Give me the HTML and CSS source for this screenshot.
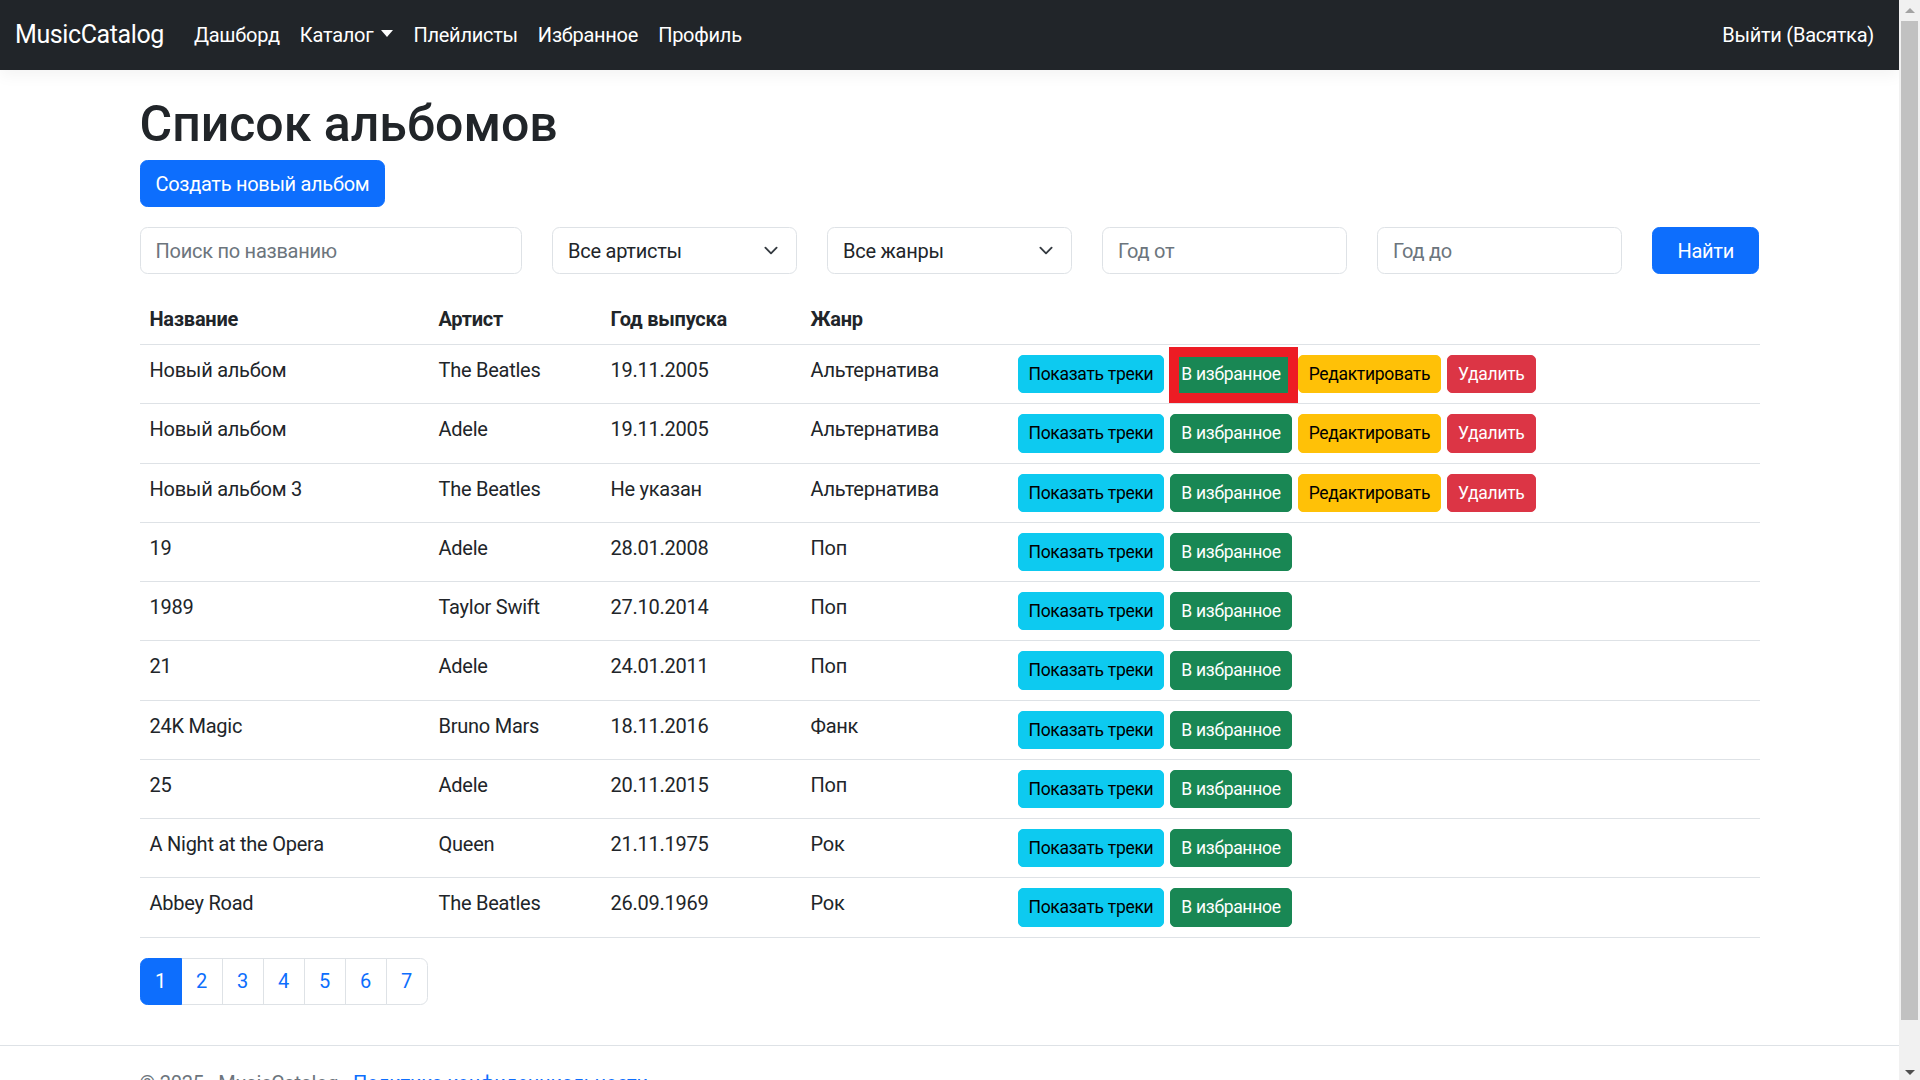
FILE: index.html
```html
<!DOCTYPE html>
<html lang="ru">
<head>
<meta charset="utf-8">
<title>Список альбомов - MusicCatalog</title>
<link rel="stylesheet" href="styles.css">
</head>
<body>
<div class="screen">
  <div class="page">
    <header class="site-header">
      <nav class="navbar">
        <a class="brand" href="#">MusicCatalog</a>
        <ul class="nav">
          <li><a class="nav-link" href="#">Дашборд</a></li>
          <li><a class="nav-link" href="#">Каталог<span class="caret"></span></a></li>
          <li><a class="nav-link" href="#">Плейлисты</a></li>
          <li><a class="nav-link" href="#">Избранное</a></li>
          <li><a class="nav-link" href="#">Профиль</a></li>
        </ul>
        <ul class="nav nav-right">
          <li><a class="nav-link" href="#">Выйти (Васятка)</a></li>
        </ul>
      </nav>
    </header>

    <div class="container">
      <main class="main">
        <h1 class="title">Список альбомов</h1>
        <a class="btn btn-primary btn-create" href="#">Создать новый альбом</a>

        <form class="filters">
          <div class="col col-3"><input class="form-control" type="text" placeholder="Поиск по названию"></div>
          <div class="col col-2">
            <div class="form-select"><span>Все артисты</span>
              <svg class="chev" viewBox="0 0 16 16" width="20" height="15"><path fill="none" stroke="#343a40" stroke-linecap="round" stroke-linejoin="round" stroke-width="2" d="m2 5 6 6 6-6"/></svg>
            </div>
          </div>
          <div class="col col-2">
            <div class="form-select"><span>Все жанры</span>
              <svg class="chev" viewBox="0 0 16 16" width="20" height="15"><path fill="none" stroke="#343a40" stroke-linecap="round" stroke-linejoin="round" stroke-width="2" d="m2 5 6 6 6-6"/></svg>
            </div>
          </div>
          <div class="col col-2"><input class="form-control" type="text" placeholder="Год от"></div>
          <div class="col col-2"><input class="form-control" type="text" placeholder="Год до"></div>
          <div class="col col-1"><button class="btn btn-primary btn-block" type="button">Найти</button></div>
        </form>

        <table class="table">
          <colgroup>
            <col class="c-name"><col class="c-artist"><col class="c-year"><col class="c-genre"><col class="c-actions">
          </colgroup>
          <thead>
            <tr><th>Название</th><th>Артист</th><th>Год выпуска</th><th>Жанр</th><th></th></tr>
          </thead>
          <tbody>
            <tr>
              <td>Новый альбом</td><td>The Beatles</td><td>19.11.2005</td><td>Альтернатива</td>
              <td><div class="actions"><a class="btn btn-sm btn-info" href="#">Показать треки</a><a class="btn btn-sm btn-success marked" href="#">В избранное<span class="mark"></span></a><a class="btn btn-sm btn-warning" href="#">Редактировать</a><a class="btn btn-sm btn-danger" href="#">Удалить</a></div></td>
            </tr>
            <tr>
              <td>Новый альбом</td><td>Adele</td><td>19.11.2005</td><td>Альтернатива</td>
              <td><div class="actions"><a class="btn btn-sm btn-info" href="#">Показать треки</a><a class="btn btn-sm btn-success" href="#">В избранное</a><a class="btn btn-sm btn-warning" href="#">Редактировать</a><a class="btn btn-sm btn-danger" href="#">Удалить</a></div></td>
            </tr>
            <tr>
              <td>Новый альбом 3</td><td>The Beatles</td><td>Не указан</td><td>Альтернатива</td>
              <td><div class="actions"><a class="btn btn-sm btn-info" href="#">Показать треки</a><a class="btn btn-sm btn-success" href="#">В избранное</a><a class="btn btn-sm btn-warning" href="#">Редактировать</a><a class="btn btn-sm btn-danger" href="#">Удалить</a></div></td>
            </tr>
            <tr>
              <td>19</td><td>Adele</td><td>28.01.2008</td><td>Поп</td>
              <td><div class="actions"><a class="btn btn-sm btn-info" href="#">Показать треки</a><a class="btn btn-sm btn-success" href="#">В избранное</a></div></td>
            </tr>
            <tr>
              <td>1989</td><td>Taylor Swift</td><td>27.10.2014</td><td>Поп</td>
              <td><div class="actions"><a class="btn btn-sm btn-info" href="#">Показать треки</a><a class="btn btn-sm btn-success" href="#">В избранное</a></div></td>
            </tr>
            <tr>
              <td>21</td><td>Adele</td><td>24.01.2011</td><td>Поп</td>
              <td><div class="actions"><a class="btn btn-sm btn-info" href="#">Показать треки</a><a class="btn btn-sm btn-success" href="#">В избранное</a></div></td>
            </tr>
            <tr>
              <td>24K Magic</td><td>Bruno Mars</td><td>18.11.2016</td><td>Фанк</td>
              <td><div class="actions"><a class="btn btn-sm btn-info" href="#">Показать треки</a><a class="btn btn-sm btn-success" href="#">В избранное</a></div></td>
            </tr>
            <tr>
              <td>25</td><td>Adele</td><td>20.11.2015</td><td>Поп</td>
              <td><div class="actions"><a class="btn btn-sm btn-info" href="#">Показать треки</a><a class="btn btn-sm btn-success" href="#">В избранное</a></div></td>
            </tr>
            <tr>
              <td>A Night at the Opera</td><td>Queen</td><td>21.11.1975</td><td>Рок</td>
              <td><div class="actions"><a class="btn btn-sm btn-info" href="#">Показать треки</a><a class="btn btn-sm btn-success" href="#">В избранное</a></div></td>
            </tr>
            <tr>
              <td>Abbey Road</td><td>The Beatles</td><td>26.09.1969</td><td>Рок</td>
              <td><div class="actions"><a class="btn btn-sm btn-info" href="#">Показать треки</a><a class="btn btn-sm btn-success" href="#">В избранное</a></div></td>
            </tr>
          </tbody>
        </table>

        <ul class="pagination">
          <li class="page-item active"><a class="page-link" href="#">1</a></li>
          <li class="page-item"><a class="page-link" href="#">2</a></li>
          <li class="page-item"><a class="page-link" href="#">3</a></li>
          <li class="page-item"><a class="page-link" href="#">4</a></li>
          <li class="page-item"><a class="page-link" href="#">5</a></li>
          <li class="page-item"><a class="page-link" href="#">6</a></li>
          <li class="page-item"><a class="page-link" href="#">7</a></li>
        </ul>
      </main>
    </div>

    <footer class="footer">
      <div class="container">© 2025 - MusicCatalog - <a href="#">Политика конфиденциальности</a></div>
    </footer>
  </div>

  <div class="scrollbar">
    <div class="sb-btn"><span class="arrow-up"></span></div>
    <div class="sb-track"><div class="sb-thumb"></div></div>
    <div class="sb-btn"><span class="arrow-down"></span></div>
  </div>
</div>
</body>
</html>
```

FILE: styles.css
```css
* { box-sizing: border-box; }

html, body {
  margin: 0;
  padding: 0;
}

body {
  font-family: Roboto, "Noto Sans", "Liberation Sans", sans-serif;
  font-size: 20px;
  line-height: 1.5;
  letter-spacing: -0.25px;
  color: #212529;
  background: #fff;
}

a { text-decoration: none; }

.screen {
  display: flex;
  width: 1920px;
  height: 1080px;
  overflow: hidden;
}

.page {
  flex: 1;
  min-width: 0;
  overflow: hidden;
  position: relative;
}

/* navbar */
.site-header {
  position: relative;
  z-index: 2;
  margin-bottom: 20px;
  box-shadow: 0 5px 15px rgba(0, 0, 0, 0.05);
}

.navbar {
  display: flex;
  align-items: center;
  height: 70px;
  padding: 10px 15px;
  background: #212529;
}

.brand {
  font-size: 25px;
  line-height: 37.5px;
  padding: 6.25px 0;
  margin-right: 20px;
  color: #fff;
  white-space: nowrap;
  letter-spacing: -0.4px;
}

.nav {
  display: flex;
  list-style: none;
  margin: 0;
  padding: 0;
}

.nav-right { margin-left: auto; }

.nav-link {
  display: block;
  padding: 10px;
  line-height: 30px;
  color: #fff;
  white-space: nowrap;
}

.caret {
  display: inline-block;
  margin-left: 8px;
  vertical-align: 5px;
  border-top: 7px solid #fff;
  border-right: 6.5px solid transparent;
  border-left: 6.5px solid transparent;
}

/* layout */
.container {
  width: 100%;
  max-width: 1650px;
  margin: 0 auto;
  padding: 0 15px;
}

.main { padding-bottom: 20px; }

.title {
  margin: 0 0 6px;
  padding-top: 4px;
  font-size: 50px;
  line-height: 60px;
  font-weight: 500;
  letter-spacing: 0;
}

/* buttons */
.btn {
  display: inline-block;
  padding: 7.5px 15px;
  font-size: 20px;
  line-height: 30px;
  text-align: center;
  border: 1px solid transparent;
  border-radius: 7.5px;
  white-space: nowrap;
  font-family: inherit;
  letter-spacing: -0.3px;
  cursor: pointer;
}

.btn-create { margin-bottom: 20px; }

.btn-block { width: 100%; display: block; }

.btn-primary { background: #0d6efd; border-color: #0d6efd; color: #fff; }
.btn-info { background: #0dcaf0; border-color: #0dcaf0; color: #000; }
.btn-success { background: #198754; border-color: #198754; color: #fff; }
.btn-warning { background: #ffc107; border-color: #ffc107; color: #000; }
.btn-danger { background: #dc3545; border-color: #dc3545; color: #fff; }

.btn-sm {
  padding: 5px 10px;
  font-size: 17.5px;
  line-height: 26.25px;
  border-radius: 5px;
}

/* filters */
.filters {
  display: flex;
  margin: 0 -15px 20px;
}

.col { padding: 0 15px; flex: none; }
.col-3 { width: 25%; }
.col-2 { width: 16.666667%; }
.col-1 { width: 8.333333%; }

.form-control,
.form-select {
  display: block;
  width: 100%;
  height: 47px;
  padding: 7.5px 15px;
  font-family: inherit;
  font-size: 20px;
  line-height: 30px;
  letter-spacing: -0.25px;
  color: #212529;
  background: #fff;
  border: 1px solid #dee2e6;
  border-radius: 7.5px;
  outline: none;
}

.form-control::placeholder { color: #6c757d; opacity: 1; }

.form-select {
  display: flex;
  align-items: center;
  justify-content: space-between;
}

.chev { flex: none; display: block; }

/* table */
.table {
  width: 100%;
  border-collapse: collapse;
  table-layout: fixed;
  margin-bottom: 20px;
  vertical-align: top;
}

.c-name { width: 289px; }
.c-artist { width: 172px; }
.c-year { width: 200px; }
.c-genre { width: 207px; }

.table th,
.table td {
  padding: 10px;
  text-align: left;
  vertical-align: top;
  border-bottom: 1px solid #dee2e6;
  line-height: 30px;
  white-space: nowrap;
}

.table th { font-weight: 700; }

.actions {
  display: flex;
  gap: 6px;
}

.marked { position: relative; }

.mark {
  position: absolute;
  top: -9px;
  left: -2px;
  right: -7px;
  bottom: -11px;
  border: 10px solid #ed1c24;
  pointer-events: none;
}

/* pagination */
.pagination {
  display: flex;
  list-style: none;
  margin: 0 0 20px;
  padding: 0;
}

.page-link {
  display: block;
  padding: 7.5px 14.5px;
  line-height: 30px;
  color: #0d6efd;
  background: #fff;
  border: 1px solid #dee2e6;
  margin-left: -1px;
}

.page-item:first-child .page-link {
  margin-left: 0;
  border-radius: 7.5px 0 0 7.5px;
}

.page-item:last-child .page-link {
  border-radius: 0 7.5px 7.5px 0;
}

.page-item.active .page-link {
  background: #0d6efd;
  border-color: #0d6efd;
  color: #fff;
  position: relative;
  z-index: 1;
}

/* footer */
.footer {
  border-top: 1px solid #dee2e6;
  line-height: 75px;
  white-space: nowrap;
  color: #6c757d;
}

.footer a { color: #0d6efd; }

/* scrollbar */
.scrollbar {
  flex: none;
  width: 21px;
  height: 1080px;
  background: #f1f1f1;
  display: flex;
  flex-direction: column;
}

.sb-btn {
  height: 21px;
  display: flex;
  align-items: center;
  justify-content: center;
  flex: none;
}

.sb-track {
  flex: 1;
  padding: 0 2px;
}

.sb-thumb {
  height: 999px;
  background: #c1c1c1;
}

.arrow-up {
  width: 0;
  height: 0;
  border-left: 5px solid transparent;
  border-right: 5px solid transparent;
  border-bottom: 5px solid #a3a3a3;
}

.arrow-down {
  width: 0;
  height: 0;
  border-left: 5px solid transparent;
  border-right: 5px solid transparent;
  border-top: 5px solid #505050;
  margin-top: 6px;
}
```
